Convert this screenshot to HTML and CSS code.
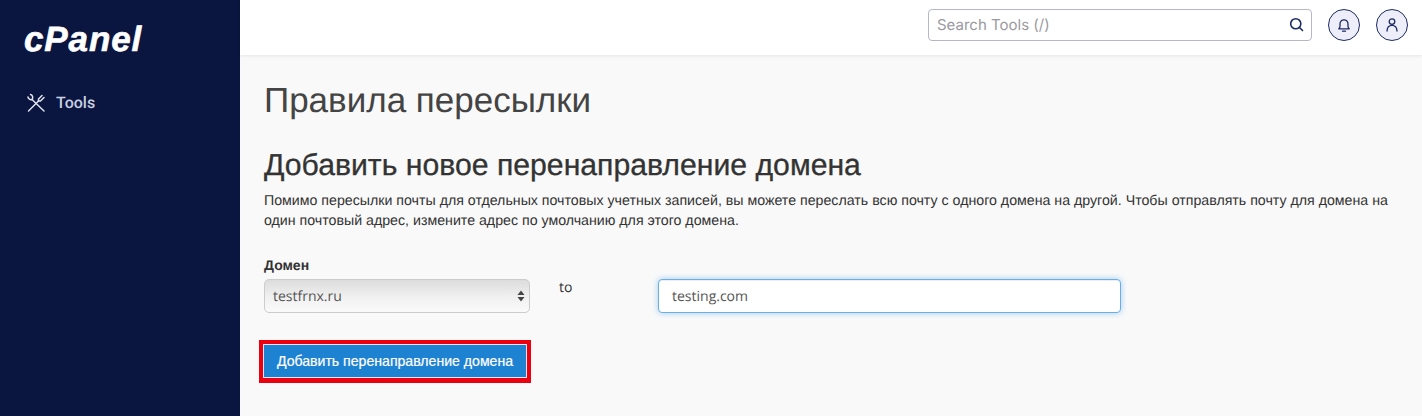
FILE: index.html
```html
<!DOCTYPE html>
<html lang="ru">
<head>
<meta charset="utf-8">
<title>Правила пересылки</title>
<link rel="stylesheet" href="styles.css">
</head>
<body>
<div class="app">
  <aside class="sidebar">
    <div class="logo">cPanel</div>
    <a class="nav-item" href="#">
      <svg class="nav-icon" viewBox="0 0 20 20" fill="none" stroke="currentColor" stroke-width="1.500" stroke-linecap="round" stroke-linejoin="round">
        <path d="M2.500 18 12.500 8"/>
        <path d="M12.500 8 12.500 6 16 2.500"/>
        <path d="M12.500 8 14.500 8 18 4.500"/>
        <path d="M2 4C2.500 6 4 7 6 6.500L18 18"/>
        <path d="M4.500 1.500C6.500 2 7.500 4.500 6 6.500"/>
      </svg>
      <span>Tools</span>
    </a>
  </aside>
  <div class="content">
    <header class="topbar">
      <div class="search">
        <span class="search-text">Search Tools (/)</span>
        <svg class="search-icon" viewBox="0 0 16 16" fill="none" stroke="#1d2a63" stroke-width="1.700" stroke-linecap="round"><circle cx="7.200" cy="7.200" r="5.400"/><path d="M11.200 11.200 14.400 14.400"/></svg>
      </div>
      <button class="round-btn" type="button" aria-label="Notifications">
        <svg viewBox="0 0 16 16" fill="none" stroke="#1d2a63" stroke-width="1.300" stroke-linecap="round" stroke-linejoin="round"><path d="M2.800 11.800h10.400c-.8-.6-1.200-1.300-1.200-2.800V7c0-2.500-1.700-4.200-4-4.200S4 4.500 4 7v2c0 1.500-.4 2.200-1.200 2.800Z"/><path d="M6.500 14.200h3"/></svg>
      </button>
      <button class="round-btn" type="button" aria-label="Account">
        <svg viewBox="0 0 16 16" fill="none" stroke="#1d2a63" stroke-width="1.300" stroke-linecap="round" stroke-linejoin="round"><circle cx="8" cy="4.600" r="2.800"/><path d="M3 14c.2-3.400 2.200-5.600 5-5.600s4.800 2.200 5 5.600"/></svg>
      </button>
    </header>
    <main class="main">
      <h1 class="page-title">Правила пересылки</h1>
      <h2 class="section-title">Добавить новое перенаправление домена</h2>
      <p class="description">Помимо пересылки почты для отдельных почтовых учетных записей, вы можете переслать всю почту с одного домена на другой. Чтобы отправлять почту для домена на один почтовый адрес, измените адрес по умолчанию для этого домена.</p>
      <form class="form-row">
        <div class="field-domain">
          <label class="field-label">Домен</label>
          <div class="select">
            <span>testfrnx.ru</span>
            <svg class="select-arrows" viewBox="0 0 8 12" fill="#444"><path d="M4 0.500 7.500 5H.5Z"/><path d="M4 11.500 .5 7h7Z"/></svg>
          </div>
        </div>
        <div class="to-label">to</div>
        <div class="input">testing.com</div>
      </form>
      <div class="highlight">
        <button class="primary-btn" type="button">Добавить перенаправление домена</button>
      </div>
    </main>
  </div>
</div>
</body>
</html>
```
FILE: styles.css
```css
* { box-sizing: border-box; }
html, body { margin: 0; height: 100%; overflow: hidden; }
body { font-family: "Liberation Sans", Arial, sans-serif; color: #333; background: #f9f9f9; text-rendering: geometricPrecision; }
.app { display: flex; height: 416px; }
.sidebar { width: 240px; flex: none; background: #0a1540; padding: 24px 0 0 24px; }
.logo { font-style: italic; font-weight: 700; font-size: 35px; line-height: 32px; letter-spacing: .9px; color: #fff; -webkit-text-stroke: .6px #fff; }
.nav-item { display: flex; align-items: center; gap: 10px; margin-top: 33px; padding-left: 2px; color: #c9d0e0; text-decoration: none; font-family: Roboto, sans-serif; font-size: 16px; font-weight: 500; line-height: 28px; }
.nav-icon { width: 20px; height: 20px; color: #dfe3ec; }
.content { flex: 1; min-width: 0; }
.topbar { height: 55px; background: #fff; box-shadow: 0 1px 3px rgba(0,0,0,.08); display: flex; align-items: center; justify-content: flex-end; padding: 0 14px 6px 0; gap: 16px; }
.search { width: 384px; height: 32px; border: 1px solid #b5b8c9; border-radius: 4px; background: #fff; display: flex; align-items: center; justify-content: space-between; padding: 0 7px 0 8px; }
.search-text { font-family: Inter, sans-serif; font-size: 15px; line-height: 32px; color: #9a9a9f; }
.search-icon { width: 15px; height: 15px; }
.round-btn { width: 32px; height: 32px; padding: 0; border: 1px solid #1d2a63; border-radius: 50%; background: #eeeefb; display: flex; align-items: center; justify-content: center; }
.round-btn svg { width: 16px; height: 16px; }
.main { padding: 0 24px; }
.page-title { margin: 24px 0 0; font-size: 35px; line-height: 44px; font-weight: 400; color: #444; }
.section-title { margin: 25px 0 0; font-size: 30.2px; line-height: 35px; font-weight: 400; color: #333; -webkit-text-stroke: .3px #333; }
.description { margin: 8px 0 0; font-size: 14.2px; line-height: 20px; color: #333; }
.form-row { display: flex; align-items: flex-start; margin-top: 24px; }
.field-domain { width: 266px; flex: none; }
.field-label { display: block; font-size: 14px; font-weight: 700; line-height: 20px; margin-bottom: 4px; }
.select { height: 34px; border: 1px solid #ccc; border-radius: 5px; background: linear-gradient(#dcdcdc, #f1f1f1 55%, #fafafa); display: flex; align-items: center; justify-content: space-between; padding: 0 4px 0 8px; font-family: "Open Sans", sans-serif; font-size: 14px; color: #555; }
.select-arrows { width: 8px; height: 12px; }
.to-label { width: 128px; flex: none; margin-top: 23px; padding-left: 29px; font-family: "Open Sans", sans-serif; font-size: 14px; line-height: 20px; color: #333; }
.input { width: 463px; height: 34px; margin-top: 24px; border: 1px solid #66afe9; border-radius: 4px; background: #fff; box-shadow: inset 0 1px 1px rgba(0,0,0,.075), 0 0 6px rgba(102,175,233,.6); padding: 0 13px; display: flex; align-items: center; font-family: "Open Sans", sans-serif; font-size: 14px; color: #555; }
.highlight { display: inline-block; margin: 27px 0 0 -5px; border: solid #ec0010; border-width: 4px 4px 5px; line-height: 0; }
.primary-btn { width: 264px; height: 34px; padding: 0; border: 1px solid #1a6fb8; outline: 1px solid #dfe8f2; outline-offset: -1px; background: #1e82d2; color: #fff; font-size: 14.1px; -webkit-text-stroke: .2px #fff; }
```
